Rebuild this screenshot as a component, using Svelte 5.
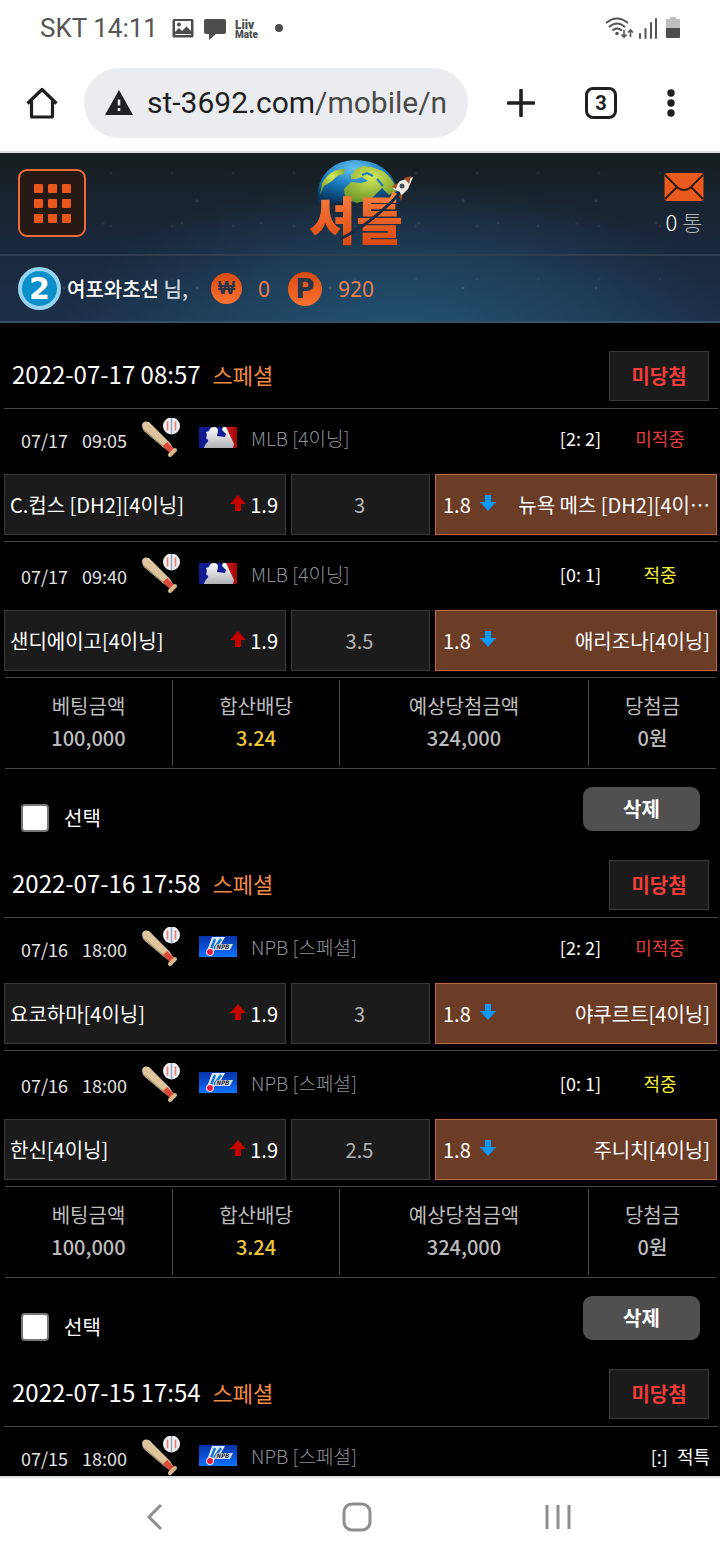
<script>
  const tickets = [
    {
      date: "2022-07-17 08:57",
      type: "스페셜",
      status: "미당첨",
      matches: [
        { day: "07/17", time: "09:05", flag: "mlb", league: "MLB [4이닝]", score: "[2: 2]", result: "미적중", state: "lose", home: "C.컵스 [DH2][4이닝]", homeOdds: "1.9", line: "3", awayOdds: "1.8", away: "뉴욕 메츠 [DH2][4이⋯" },
        { day: "07/17", time: "09:40", flag: "mlb", league: "MLB [4이닝]", score: "[0: 1]", result: "적중", state: "win", home: "샌디에이고[4이닝]", homeOdds: "1.9", line: "3.5", awayOdds: "1.8", away: "애리조나[4이닝]" },
      ],
      summary: { stake: "100,000", odds: "3.24", expected: "324,000", payout: "0원" },
    },
    {
      date: "2022-07-16 17:58",
      type: "스페셜",
      status: "미당첨",
      matches: [
        { day: "07/16", time: "18:00", flag: "npb", league: "NPB [스페셜]", score: "[2: 2]", result: "미적중", state: "lose", home: "요코하마[4이닝]", homeOdds: "1.9", line: "3", awayOdds: "1.8", away: "야쿠르트[4이닝]" },
        { day: "07/16", time: "18:00", flag: "npb", league: "NPB [스페셜]", score: "[0: 1]", result: "적중", state: "win", home: "한신[4이닝]", homeOdds: "1.9", line: "2.5", awayOdds: "1.8", away: "주니치[4이닝]" },
      ],
      summary: { stake: "100,000", odds: "3.24", expected: "324,000", payout: "0원" },
    },
    {
      date: "2022-07-15 17:54",
      type: "스페셜",
      status: "미당첨",
      matches: [
        { day: "07/15", time: "18:00", flag: "npb", league: "NPB [스페셜]", score: "[:]", result: "적특", state: "void" },
      ],
    },
  ];

  let selected = $state(tickets.map(() => false));
</script>

{#snippet arrow(dir)}
  <svg class="arrow" viewBox="0 0 16 16" aria-hidden="true">
    {#if dir === "up"}
      <path d="M8 0 L16 9 H11 V16 H5 V9 H0 Z" fill="#c40000" />
    {:else}
      <path d="M8 16 L16 7 H11 V0 H5 V7 H0 Z" fill="#0c98fa" />
    {/if}
  </svg>
{/snippet}

{#snippet bat()}
  <svg class="bat" viewBox="0 0 38 40" aria-hidden="true">
    <path d="M0 7 Q1 2 7 4 L28 25 L33 33 L29 35 L20 28 L2 13 Q0 10 0 7 Z" fill="#dcc49c" />
    <path d="M2 12 L23 30" stroke="#b29a75" stroke-width="1.500" />
    <path d="M23 26 L31 34" stroke="#d94a3b" stroke-width="6" />
    <path d="M28 37 L33 32" stroke="#d9b78d" stroke-width="4" stroke-linecap="round" />
    <circle cx="29.500" cy="8" r="8.500" fill="#edf0f3" />
    <path d="M25.500 3.500 V12.500 M33.500 3.500 V12.500" stroke="#ee7770" stroke-width="1.600" />
    <path d="M29.500 0 V16" stroke="#9aa6b8" stroke-width="1.500" />
  </svg>
{/snippet}

{#snippet flag(kind)}
  <svg class="flag" viewBox="0 0 38 21" role="img" aria-label={kind.toUpperCase()}>
    {#if kind === "mlb"}
      <defs>
        <linearGradient id="player" x2="0" y2="1">
          <stop offset="0" stop-color="#fff" />
          <stop offset="1" stop-color="#aeb0b5" />
        </linearGradient>
        <linearGradient id="mlbred">
          <stop offset="0" stop-color="#e21a1a" />
          <stop offset="1" stop-color="#9c0808" />
        </linearGradient>
      </defs>
      <rect width="38" height="21" fill="#101a91" />
      <path d="M25 0 H38 V21 H34 Z" fill="url(#mlbred)" />
      <path d="M5 21 C6 16 10 15 9 13 L7 11 L8 8 L7 5 L10 4 Q11 0 15 0 Q19 0 19 4 L18 9 L26 10 L27 7 L23 3 L24 0 H27 L35 17 L34 21 Z" fill="url(#player)" />
    {:else}
      <defs>
        <linearGradient id="npbblue" x2="0" y2="1">
          <stop offset="0" stop-color="#0733a5" />
          <stop offset=".6" stop-color="#0a55dd" />
          <stop offset="1" stop-color="#0e75ff" />
        </linearGradient>
      </defs>
      <rect width="38" height="21" fill="url(#npbblue)" />
      <path d="M13 1 H26 L22 8 L15 15 H8 Z" fill="#d8eaff" />
      <path d="M16 3 L12 13 M22 3 L15 13" stroke="#1873cf" stroke-width="2.400" />
      <path d="M18 8 H34 L31 14 H15 Z" fill="#cfd8e6" />
      <text x="17" y="13" font-size="6" font-weight="700" font-style="italic" fill="#161a30">NPB</text>
      <circle cx="11" cy="16" r="3.600" fill="#e51a3c" stroke="#fff" />
    {/if}
  </svg>
{/snippet}

<div class="phone">
  <div class="status">
    <span class="carrier">SKT 14:11</span>
    <svg class="st-icons" viewBox="0 0 114 24" aria-hidden="true">
      <path d="M2 3 H20 Q21.500 3 21.500 4.500 V20 Q21.500 21.500 20 21.500 H2 Q.5 21.500 .5 20 V4.500 Q.5 3 2 3 Z M3 5 V19 H19 V5 Z" fill="#4d4d4d" fill-rule="evenodd" />
      <path d="M3 18 V16 L7 12 L10 15 L14.500 10.500 L19 15 V18 Z" fill="#4d4d4d" />
      <circle cx="7" cy="8.500" r="2" fill="#4d4d4d" />
      <path d="M34 3 H52 Q54 3 54 5 V16 Q54 18 52 18 H44 L37 24 V18 H34 Q32 18 32 16 V5 Q32 3 34 3 Z" fill="#4d4d4d" />
      <text x="63" y="13" font-size="12" font-weight="900" fill="#4d4d4d">Liiv</text>
      <text x="63" y="22" font-size="10" font-weight="900" fill="#4d4d4d">Mate</text>
      <circle cx="107" cy="12" r="4" fill="#4d4d4d" />
    </svg>
    <svg class="signal" viewBox="0 0 76 24" aria-hidden="true">
      <g fill="none" stroke="#555" stroke-width="2">
        <path d="M1 7 Q12 -2 23 7" />
        <path d="M4 11 Q12 4 20 11" />
        <path d="M7.500 14.500 Q12 10.500 17 14.500" />
        <path d="M19 14 V21 M16.500 18.500 L19 21 L21.500 18.500 M25.500 21 V14 M23 16.500 L25.500 14 L28 16.500" stroke-width="1.600" />
        <path d="M35 22 V18 M40.500 22 V13 M46 22 V7 M51 22 V3" stroke-linecap="round" />
      </g>
      <circle cx="12" cy="17.500" r="1.800" fill="#555" />
      <path d="M65 1 H71 V3 H75 V12 H61 V3 H65 Z" fill="#bebebe" />
      <path d="M61 12 H75 V21 Q75 22 74 22 H62 Q61 22 61 21 Z" fill="#4d4d4d" />
    </svg>
  </div>

  <div class="browser">
    <button class="tool home" aria-label="홈">
      <svg width="32" height="32" viewBox="0 0 32 32">
        <path d="M1.500 16.500 L16 2.500 L30.500 16.500 M5.500 14 V29 Q5.500 30 6.500 30 H25.500 Q26.500 30 26.500 29 V14" fill="none" stroke="#1f1f1f" stroke-width="3.200" stroke-linejoin="round" />
      </svg>
    </button>
    <a class="url" href="#top">
      <svg width="28" height="26" viewBox="0 0 28 26" aria-hidden="true">
        <path d="M14 0 L28 25 H0 Z" fill="#202124" />
        <path d="M14 9.500 V15.500 M14 18 V21" stroke="#ebecf0" stroke-width="2.600" />
      </svg>
      <span class="address">st-3692.com<span>/mobile/n</span></span>
    </a>
    <button class="tool plus" aria-label="새 탭">
      <svg width="28" height="28" viewBox="0 0 28 28">
        <path d="M14 1.500 V26.500 M1.500 14 H26.500" stroke="#1f1f1f" stroke-width="3.600" stroke-linecap="round" />
      </svg>
    </button>
    <button class="tool tabs" aria-label="탭 3개"><span>3</span></button>
    <button class="tool more" aria-label="메뉴">
      <svg width="8" height="28" viewBox="0 0 8 28" fill="#1f1f1f">
        <circle cx="4" cy="4" r="3.700" />
        <circle cx="4" cy="14" r="3.700" />
        <circle cx="4" cy="24" r="3.700" />
      </svg>
    </button>
  </div>

  <main id="top">
    <header>
      <div class="bar">
        <button class="menu" aria-label="전체 메뉴">
          {#each Array(9) as _}
            <i></i>
          {/each}
        </button>
        <a class="logo" href="#top" aria-label="셔틀">
          <svg width="104" height="90" viewBox="4 0 104 90">
            <defs>
              <linearGradient id="orange" x2="0" y2="1">
                <stop offset="0" stop-color="#ff8749" />
                <stop offset="1" stop-color="#d63f07" />
              </linearGradient>
              <radialGradient id="sea" cx=".45" cy=".2" r=".8">
                <stop offset="0" stop-color="#66c4ef" />
                <stop offset=".5" stop-color="#1979bd" />
                <stop offset="1" stop-color="#07355e" />
              </radialGradient>
              <radialGradient id="land" cx=".5" cy=".3" r=".8">
                <stop offset="0" stop-color="#d6e85a" />
                <stop offset="1" stop-color="#5c8c22" />
              </radialGradient>
            </defs>
            <path d="M14 45 C8 22 26 2 50 2 C75 2 93 16 94 44 Z" fill="url(#sea)" />
            <path d="M17 25 Q26 10 40 11 L39 16 L32 18 L27 23 L19 28 L15 37 Z" fill="url(#land)" />
            <path d="M46 17 L51 11 L58 8 L66 9 L78 13 Q88 20 92 33 L84 37 L77 30 L72 35 L66 41 L52 45 L40 41 L39 31 L46 24 L56 25 L63 23 L57 19 L51 21 L46 21 Z" fill="url(#land)" />
            <path d="M57 17 L62 15 L68 18 M72 21 L78 28" stroke="#1979bd" stroke-width="2" fill="none" />
            <text x="4" y="82" font-size="51" font-weight="900" fill="url(#orange)">셔틀</text>
            <path d="M35 81 Q65 67 94 36" stroke="#1b2b42" stroke-width="3" fill="none" />
            <path d="M88 31 L95 23 L108 19 L103 31 L96 38 L95 34 Z" fill="#f0ece5" />
            <path d="M99 20 L106 18 L104 26 Z M87 28 L93 25 L91 31 Z M94 38 L98 36 L96 43 Z" fill="#a44f24" />
            <path d="M88 33 L92 36 L82 46 Z" fill="#f78a37" />
            <circle cx="97" cy="28" r="2.500" fill="#44515c" />
          </svg>
        </a>
        <a class="mail" href="#mail">
          <svg width="40" height="30" viewBox="0 0 40 30" aria-hidden="true">
            <rect x=".5" y="1" width="39" height="28" rx="3" fill="#e85a1d" />
            <path d="M1 3 L14 16 Q20 20 26 16 L39 3 M1 27 L13 15 M39 27 L27 15" fill="none" stroke="#2a1a14" stroke-width="1.800" />
          </svg>
          <span>0 <em>통</em></span>
        </a>
      </div>
      <div class="user">
        <span class="level">2</span>
        <span class="name">여포와초선 <em>님,</em></span>
        <span class="coin won">₩</span>
        <span class="amount cash">0</span>
        <span class="coin point">P</span>
        <span class="amount">920</span>
      </div>
    </header>

    <div class="list">
      {#each tickets as ticket, i}
        <section>
          <div class="ticket-head">
            <h2>{ticket.date}<span>{ticket.type}</span></h2>
            <span class="badge">{ticket.status}</span>
          </div>

          {#each ticket.matches as m}
            <div class="match">
              <div class="info">
                <span class="when">{m.day}</span>
                <span class="when">{m.time}</span>
                {@render bat()}
                {@render flag(m.flag)}
                <span class="league">{m.league}</span>
                <span class="score">{m.score}</span>
                <span class="result {m.state}">{m.result}</span>
              </div>
              {#if m.home}
                <div class="odds">
                  <button class="pick">
                    <span class="team">{m.home}</span>
                    {@render arrow("up")}
                    <span>{m.homeOdds}</span>
                  </button>
                  <button class="pick mid">{m.line}</button>
                  <button class="pick on">
                    <span>{m.awayOdds}</span>
                    {@render arrow("down")}
                    <span class="team">{m.away}</span>
                  </button>
                </div>
              {/if}
            </div>
          {/each}

          {#if ticket.summary}
            <div class="summary">
              <table>
                <thead>
                  <tr><th>베팅금액</th><th>합산배당</th><th class="wide">예상당첨금액</th><th class="last">당첨금</th></tr>
                </thead>
                <tbody>
                  <tr>
                    <td>{ticket.summary.stake}</td>
                    <td class="total">{ticket.summary.odds}</td>
                    <td>{ticket.summary.expected}</td>
                    <td>{ticket.summary.payout}</td>
                  </tr>
                </tbody>
              </table>
            </div>
            <div class="actions">
              <label>
                <input type="checkbox" bind:checked={selected[i]} />
                선택
              </label>
              <button class="delete">삭제</button>
            </div>
          {/if}
        </section>
      {/each}
    </div>
  </main>

  <nav>
    <button aria-label="뒤로">
      <svg width="20" height="28" viewBox="0 0 20 28"><path d="M16 2 L4 14 L16 26" /></svg>
    </button>
    <button aria-label="홈 화면">
      <svg width="30" height="30" viewBox="0 0 30 30"><rect x="2" y="2" width="26" height="26" rx="8" /></svg>
    </button>
    <button aria-label="최근 앱">
      <svg width="28" height="28" viewBox="0 0 28 28"><path d="M3 2 V26 M14 2 V26 M25 2 V26" /></svg>
    </button>
  </nav>
</div>

<style>
  :global(body) {
    background: #fff;
  }

  .phone {
    display: flex;
    flex-direction: column;
    height: 100vh;
    font-family: "Noto Sans CJK KR", "Noto Sans", sans-serif;
    font-size: 20px;
    line-height: 28px;
    color: #fff;
  }

  button {
    padding: 0;
    border: none;
    background: none;
    font: inherit;
    color: inherit;
    cursor: pointer;
  }

  a {
    color: inherit;
    text-decoration: none;
  }

  svg {
    display: block;
    flex: none;
  }

  em {
    font-style: normal;
  }

  .status {
    display: flex;
    align-items: center;
    height: 54px;
    padding: 2px 39px 0 40px;
    box-sizing: border-box;
    font-family: Roboto, sans-serif;
    font-size: 26px;
    color: #555;
  }

  .st-icons {
    width: 114px;
    height: 24px;
    margin-left: 14px;
  }

  .signal {
    width: 76px;
    height: 24px;
    margin-left: auto;
  }

  .browser {
    display: flex;
    align-items: center;
    height: 97px;
    padding: 0 6px 0 0;
    border-bottom: 2px solid #dedfe1;
    color: #1f1f1f;
  }

  .tool {
    display: flex;
    align-items: center;
    justify-content: center;
    height: 70px;
  }

  .home {
    width: 84px;
  }

  .plus {
    width: 106px;
  }

  .tabs {
    width: 54px;
  }

  .more {
    width: 86px;
  }

  .tabs span {
    box-sizing: border-box;
    width: 32px;
    height: 32px;
    border: 3px solid #1f1f1f;
    border-radius: 8px;
    font-family: Roboto, sans-serif;
    font-size: 20px;
    font-weight: 700;
    line-height: 26px;
  }

  .url {
    display: flex;
    align-items: center;
    flex: 1;
    gap: 14px;
    min-width: 0;
    height: 70px;
    padding: 0 10px 0 21px;
    border-radius: 35px;
    box-sizing: border-box;
    background: #ebecf0;
    font-family: Roboto, sans-serif;
    font-size: 30px;
    line-height: 40px;
  }

  .address {
    flex: 1;
    white-space: nowrap;
  }

  .address span {
    color: #4a4a4a;
  }

  main {
    flex: 1;
    min-height: 0;
    overflow: hidden;
    background: #000;
  }

  header {
    background:
      radial-gradient(circle at 64px 48px, #ffffff1c 0 1px, transparent 2px) 0 0 / 133px 87px,
      radial-gradient(circle at 24px 70px, #ffffff12 0 1px, transparent 2px) 0 0 / 79px 101px,
      radial-gradient(circle at 50px 20px, #ffffff0c 0 1px, transparent 2px) 0 0 / 61px 53px,
      radial-gradient(ellipse at 55% 110%, #225474 0, transparent 60%),
      linear-gradient(#171e1f, #19273a 50%, #1c3049);
  }

  .bar {
    display: grid;
    grid-template-columns: 1fr auto 1fr;
    align-items: center;
    height: 100px;
    padding: 0 16px 1px 18px;
    border-bottom: 2px solid #313e4f;
  }

  .menu {
    display: grid;
    grid-template-columns: repeat(3, 9px);
    gap: 6px 5px;
    align-content: center;
    justify-content: center;
    box-sizing: border-box;
    width: 68px;
    height: 68px;
    border: 2px solid #e96a35;
    border-radius: 9px;
    background: #271a14;
  }

  .menu i {
    height: 9px;
    border-radius: 1px;
    background: #e8571b;
  }

  .logo svg {
    overflow: visible;
  }

  .mail {
    display: flex;
    flex-direction: column;
    align-items: center;
    justify-self: end;
    gap: 5px;
    font-size: 22px;
    font-weight: 300;
  }

  .mail em {
    color: #aeb1b3;
  }

  .user {
    display: flex;
    align-items: center;
    height: 65px;
    padding: 0 18px;
    border-bottom: 2px solid #355168;
  }

  .level {
    box-sizing: border-box;
    width: 43px;
    height: 43px;
    border: 4px solid #93d3ef;
    border-radius: 50%;
    background: #0c8fc9;
    font-family: "DejaVu Sans", sans-serif;
    font-size: 30px;
    font-weight: 700;
    line-height: 35px;
    text-align: center;
  }

  .name {
    margin: 0 23px 0 6px;
    font-weight: 500;
  }

  .name em {
    color: #d0d6df;
  }

  .coin {
    border-radius: 50%;
    background: linear-gradient(#d84a10, #fb7230);
    color: #26344a;
    font-weight: 700;
    text-align: center;
  }

  .won {
    width: 31px;
    height: 31px;
    font-family: "Liberation Sans", sans-serif;
    font-size: 18px;
    line-height: 30px;
  }

  .point {
    width: 34px;
    height: 34px;
    font-family: "DejaVu Sans", sans-serif;
    font-size: 26px;
    line-height: 34px;
  }

  .amount {
    margin-left: 16px;
    font-family: "Noto Sans", sans-serif;
    font-size: 21px;
    color: #ec8051;
  }

  .cash {
    margin-right: 18px;
  }

  .list {
    padding-top: 20px;
  }

  .ticket-head {
    display: flex;
    align-items: center;
    justify-content: space-between;
    height: 65px;
    margin: 0 2px 0 4px;
    padding: 0 9px 0 8px;
    border-bottom: 1px solid #464646;
  }

  h2 {
    margin: 0;
    padding-bottom: 4px;
    font-size: 24px;
    font-weight: 400;
  }

  h2 span {
    margin-left: 12px;
    font-size: 22px;
    color: #f08c42;
  }

  .badge {
    width: 98px;
    border: 1px solid #3b3b3b;
    background: #1b1b1b;
    font-weight: 700;
    line-height: 48px;
    text-align: center;
    color: #ee3d3a;
  }

  .match + .match {
    margin: 6px 0 0;
  }

  .match + .match::before {
    content: "";
    display: block;
    height: 1px;
    margin: 0 2px 3px 4px;
    background: #464646;
  }

  .info {
    display: grid;
    grid-template-columns: 61px 60px 57px 52px 1fr auto auto;
    align-items: center;
    height: 57px;
    padding: 0 10px 8px 21px;
    font-size: 18px;
  }

  .when {
    padding-top: 4px;
    color: #e2e2e2;
  }

  .bat {
    width: 38px;
    height: 40px;
  }

  .flag {
    width: 38px;
    height: 21px;
  }

  .league {
    font-size: 19px;
    font-weight: 300;
    color: #919198;
  }

  .result {
    min-width: 100px;
    margin-left: 9px;
    text-align: center;
  }

  .lose {
    color: #e43f3c;
  }

  .win {
    color: #f5ee35;
  }

  .void {
    min-width: 0;
  }

  .odds {
    display: grid;
    grid-template-columns: 282fr 139fr 282fr;
    gap: 5px;
    padding: 0 3px 0 4px;
  }

  .pick {
    display: flex;
    align-items: center;
    gap: 4px;
    box-sizing: border-box;
    min-width: 0;
    height: 61px;
    padding: 0 7px 0 5px;
    border: 1px solid #3a3a3a;
    background: #1b1b1b;
    white-space: nowrap;
  }

  .pick .team {
    flex: 1;
    text-align: left;
  }

  .mid {
    justify-content: center;
    color: #b4b4b4;
  }

  .on {
    gap: 9px;
    padding: 0 6px 0 7px;
    border-color: #c0683e;
    background: #6b3d27;
  }

  .on .team {
    text-align: right;
  }

  .arrow {
    width: 16px;
    height: 16px;
    margin-bottom: 4px;
  }

  .summary {
    margin: 6px 4px 0 5px;
    padding: 2px 0;
    border: solid #464646;
    border-width: 1px 0;
  }

  table {
    width: 100%;
    height: 86px;
    border-spacing: 0;
    table-layout: fixed;
    text-align: center;
    color: #bdbdbd;
  }

  th {
    box-sizing: border-box;
    width: 167px;
    padding: 12px 0 0;
    font-weight: 400;
  }

  td {
    padding: 2px 0 12px;
    font-weight: 500;
  }

  th + th,
  td + td {
    border-left: 1px solid #464646;
  }

  .wide {
    width: 249px;
  }

  .last {
    width: auto;
  }

  .total {
    color: #eec636;
  }

  .actions {
    display: flex;
    align-items: flex-start;
    justify-content: space-between;
    height: 65px;
    padding: 18px 20px 0 21px;
  }

  label {
    display: flex;
    align-items: center;
    gap: 15px;
    height: 62px;
  }

  input {
    appearance: none;
    width: 28px;
    height: 28px;
    margin: 0;
    border: 2px solid #777;
    border-radius: 4px;
    background: #fff;
  }

  input:checked {
    background: #0c98fa;
  }

  .delete {
    width: 117px;
    height: 44px;
    border-radius: 9px;
    background: #505050;
    font-weight: 700;
  }

  nav {
    display: flex;
    align-items: center;
    height: 78px;
    padding: 0 61px 4px 54px;
    border-top: 2px solid #dedfe1;
  }

  nav button {
    display: flex;
    justify-content: center;
    flex: 1;
  }

  nav svg {
    fill: none;
    stroke: #8e8e8e;
    stroke-width: 3;
  }
</style>
